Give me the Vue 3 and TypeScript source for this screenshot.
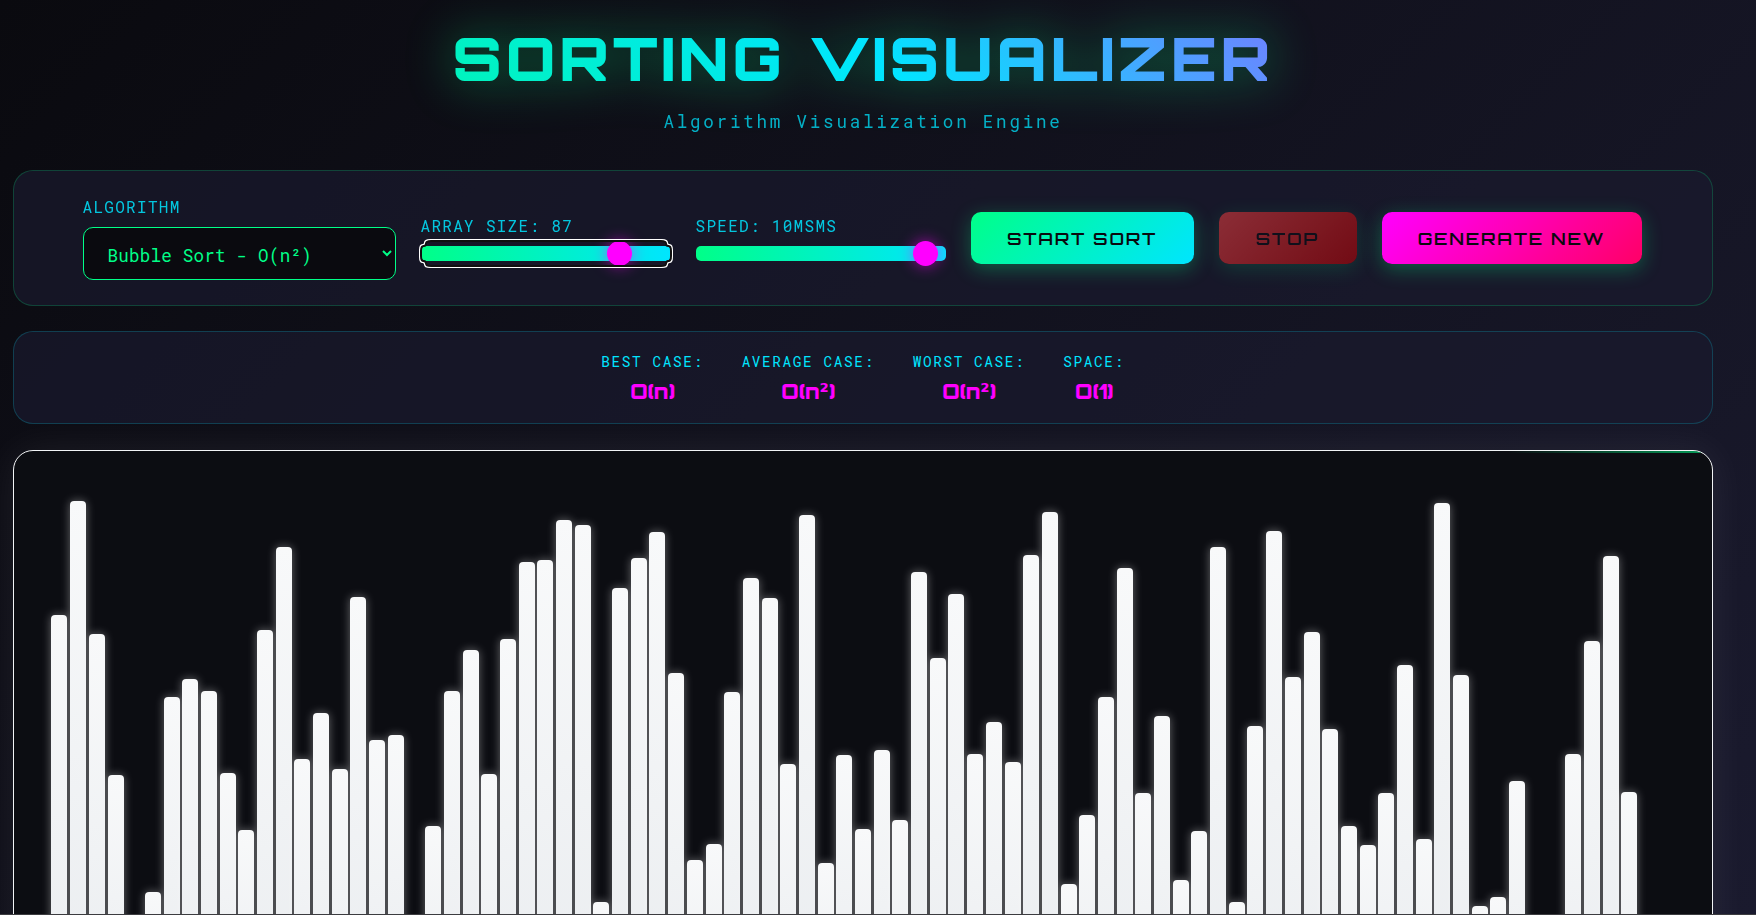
<script setup lang="ts">
import { onMounted, ref } from 'vue'

// Tops of the bars in page pixels; anything past the fold is just a short bar.
const tops = [
  615, 501, 634, 775, 925, 892, 697, 679, 691, 773, 830, 630, 547, 759, 713, 769, 597, 740, 735, 925,
  826, 691, 650, 774, 639, 562, 560, 520, 525, 902, 588, 558, 532, 673, 860, 844, 692, 578, 598, 764,
  515, 863, 755, 829, 750, 820, 572, 658, 594, 754, 722, 762, 555, 512, 884, 815, 697, 568, 793, 716,
  880, 831, 547, 902, 726, 531, 677, 632, 729, 826, 845, 793, 665, 839, 503, 675, 906, 897, 781, 925,
  925, 754, 641, 556, 792, 925, 925,
]
const BASE = 1039
const bars = tops.map((top) => BASE - top)

const algorithm = ref('bubble')
const size = ref(87)
const speed = ref(10)
const sizeInput = ref<HTMLInputElement | null>(null)

const complexity = [
  { label: 'BEST CASE:', value: 'O(n)' },
  { label: 'AVERAGE CASE:', value: 'O(n²)' },
  { label: 'WORST CASE:', value: 'O(n²)' },
  { label: 'SPACE:', value: 'O(1)' },
]

onMounted(() => {
  sizeInput.value?.focus()
})
</script>

<template>
  <div class="page">
    <header class="header">
      <h1 class="title">SORTING VISUALIZER</h1>
      <p class="subtitle">Algorithm Visualization Engine</p>
    </header>

    <section class="panel controls">
      <div class="group">
        <label class="label">ALGORITHM</label>
        <select v-model="algorithm" class="select">
          <option value="bubble">Bubble Sort - O(n²)</option>
          <option value="quick">Quick Sort - O(n log n)</option>
          <option value="merge">Merge Sort - O(n log n)</option>
        </select>
      </div>
      <div class="group slider-group">
        <label class="label">ARRAY SIZE: {{ size }}</label>
        <input ref="sizeInput" v-model="size" class="range" type="range" min="10" max="101" />
      </div>
      <div class="group slider-group">
        <label class="label">SPEED: {{ speed }}MSMS</label>
        <input v-model="speed" class="range speed-range" type="range" min="9" max="100" />
      </div>
      <button class="btn start">START SORT</button>
      <button class="btn stop">STOP</button>
      <button class="btn generate">GENERATE NEW</button>
    </section>

    <section class="panel info">
      <div v-for="item in complexity" :key="item.label" class="info-item">
        <div class="info-label">{{ item.label }}</div>
        <div class="info-value">{{ item.value }}</div>
      </div>
    </section>

    <section class="stage">
      <div
        v-for="(h, i) in bars"
        :key="i"
        class="bar"
        :style="{ height: h + 'px' }"
      />
    </section>
  </div>
</template>

<style>
html,
body {
  margin: 0;
  height: 915px;
  overflow: hidden;
  background: #0a0a0f;
}
</style>

<style scoped>
.page {
  box-sizing: border-box;
  height: 915px;
  overflow: hidden;
  padding: 0 43px 0 13px;
  border-bottom: 1px solid #3c3c40;
  background: linear-gradient(135deg, #0a0a0f 0%, #1a1a2e 100%);
  font-family: 'Roboto Mono', 'DejaVu Sans Mono', monospace;
}
.header {
  height: 170px;
  text-align: center;
}
.title {
  margin: 0;
  padding-top: 23px;
  font-family: Orbitron, 'DejaVu Sans', sans-serif;
  font-size: 60px;
  line-height: 70px;
  font-weight: 900;
  letter-spacing: 3.8px;
  background: linear-gradient(45deg, #00ff88 5%, #00e5ff 50%, #ff00ff 105%);
  -webkit-background-clip: text;
  background-clip: text;
  color: transparent;
  filter: drop-shadow(0 0 25px rgba(0, 255, 136, 0.45));
}
.subtitle {
  margin: 18px 0 0;
  font-size: 17.6px;
  line-height: 22px;
  letter-spacing: 2.75px;
  color: #00e5ff;
  opacity: 0.75;
}
.panel {
  box-sizing: border-box;
  border-radius: 20px;
  background: rgba(26, 26, 46, 0.7);
}
.controls {
  height: 136px;
  display: flex;
  align-items: center;
  justify-content: center;
  gap: 25px;
  padding-right: 2px;
  border: 1px solid rgba(0, 255, 136, 0.2);
}
.group {
  display: flex;
  flex-direction: column;
  gap: 10px;
}
.slider-group {
  gap: 10px;
}
.label {
  font-size: 16px;
  line-height: 21px;
  letter-spacing: 1.3px;
  color: #00e5ff;
  opacity: 0.85;
}
.select {
  box-sizing: border-box;
  width: 313px;
  height: 53px;
  padding: 3px 20px 0;
  border: 1px solid #00ff88;
  border-radius: 10px;
  background: #0a0a0f;
  color: #00ff88;
  font-family: inherit;
  font-size: 17.6px;
  letter-spacing: 0.2px;
}
.range {
  -webkit-appearance: none;
  appearance: none;
  display: block;
  box-sizing: border-box;
  width: 250px;
  height: 15px;
  margin: 0;
  padding: 0 5px;
  border-radius: 5px;
  background: linear-gradient(90deg, #00ff88, #00e5ff);
}
.speed-range {
  direction: rtl;
}
.range::-webkit-slider-thumb {
  -webkit-appearance: none;
  width: 25px;
  height: 25px;
  border-radius: 50%;
  background: #ff00ff;
  box-shadow: 0 0 15px rgba(255, 0, 255, 0.6);
  cursor: pointer;
}
.btn {
  box-sizing: border-box;
  height: 52px;
  border: none;
  border-radius: 10px;
  font-family: Orbitron, 'DejaVu Sans', sans-serif;
  font-size: 17.6px;
  font-weight: 600;
  letter-spacing: 1.76px;
  color: #0a0a0f;
}
.start {
  width: 223px;
  background: linear-gradient(135deg, #00ff88, #00e5ff);
  box-shadow: 0 5px 20px rgba(0, 255, 136, 0.3);
}
.stop {
  width: 138px;
  background: linear-gradient(135deg, #ff4444, #cc0000);
  opacity: 0.5;
  box-shadow: 0 5px 20px rgba(0, 255, 136, 0.3);
}
.generate {
  width: 260px;
  background: linear-gradient(135deg, #ff00ff, #ff0066);
  box-shadow: 0 5px 20px rgba(0, 255, 136, 0.3);
}
.info {
  height: 93px;
  margin-top: 25px;
  display: flex;
  align-items: center;
  justify-content: center;
  gap: 38px;
  border: 1px solid rgba(0, 229, 255, 0.2);
}
.info-item {
  text-align: center;
}
.info-label {
  font-size: 14.4px;
  line-height: 19px;
  letter-spacing: 1.6px;
  color: #00e5ff;
}
.info-value {
  margin-top: 8px;
  font-family: Orbitron, 'DejaVu Sans', sans-serif;
  font-size: 21px;
  line-height: 25px;
  font-weight: 900;
  color: #ff00ff;
}
.stage {
  position: relative;
  box-sizing: border-box;
  height: 590px;
  margin-top: 26px;
  display: flex;
  align-items: flex-end;
  justify-content: center;
  gap: 2.69px;
  overflow: hidden;
  border: 1px solid #f2f4f6;
  border-radius: 20px;
  background: #0c0d12;
  box-shadow: 0 0 40px rgba(255, 255, 255, 0.07);
}
.stage::before {
  content: '';
  position: absolute;
  top: 0;
  left: 0;
  right: 0;
  height: 2px;
  background: linear-gradient(90deg, transparent 88%, #00ff88 100%);
  opacity: 0.6;
}
.bar {
  flex: none;
  width: 16px;
  border-radius: 4px 4px 0 0;
  background: linear-gradient(180deg, #f8f9fa, #e9ecef);
  box-shadow: 0 0 10px rgba(255, 255, 255, 0.38);
}
</style>
